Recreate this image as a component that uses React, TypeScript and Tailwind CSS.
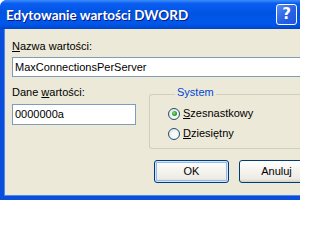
import React from "react";

function Radio({ checked, label, accel }: { checked?: boolean; label: string; accel: string }) {
  return (
    <div className="flex items-center h-[13px] gap-[3px]">
      <div className="w-[12px] h-[12px] rounded-full border border-[#1C5180] bg-[radial-gradient(circle_at_60%_60%,#FFFFFF_0%,#F4F4F0_45%,#D8D6CC_100%)] flex items-center justify-center">
        {checked && (
          <div className="w-[5px] h-[5px] rounded-full bg-[radial-gradient(circle_at_40%_40%,#8BE07D_0%,#2DA32C_55%,#1C7E1B_100%)]" />
        )}
      </div>
      <span className="leading-[13px]">
        <span className="underline decoration-1 underline-offset-1">{accel}</span>
        {label}
      </span>
    </div>
  );
}

function Button({ children, isDefault }: { children: React.ReactNode; isDefault?: boolean }) {
  return (
    <div
      className={
        isDefault
          ? "shrink-0 w-[75px] h-[23px] rounded-[3px] border border-[#003C74] bg-[linear-gradient(to_bottom,#FFFFFF_0%,#F6F5F0_40%,#ECEBE4_85%,#D6D0C5_100%)] flex items-center justify-center shadow-[inset_0_0_0_1px_#CEE7FF,inset_0_0_0_2px_#9CB7EE]"
          : "shrink-0 w-[75px] h-[23px] rounded-[3px] border border-[#003C74] bg-[linear-gradient(to_bottom,#FFFFFF_0%,#F6F5F0_40%,#ECEBE4_85%,#D6D0C5_100%)] flex items-center justify-center"
      }
    >
      <span className="leading-[13px]">{children}</span>
    </div>
  );
}

export default function App() {
  return (
    <div className="w-[300px] h-[200px] overflow-hidden font-['Liberation_Sans',Arial,sans-serif]">
      <div className="w-[300px] h-[200px] flex flex-col rounded-tl-[7px] overflow-hidden bg-[#0054E3]">
        {/* Title bar */}
        <div className="h-[29px] shrink-0 flex items-center pl-[6px] pr-[3px] bg-[linear-gradient(to_bottom,#3D8FFA_0%,#0A5DF0_12%,#0054E3_45%,#0058EA_80%,#0050DC_92%,#0043C8_100%)]">
          <div className="flex-1 min-w-0">
            <span className="text-white font-bold text-[13.5px] leading-[15px] font-['Lato','Liberation_Sans',sans-serif] [text-shadow:1px_1px_0_#0A1883]">
              Edytowanie wartości DWORD
            </span>
          </div>
          <div className="w-[21px] h-[21px] shrink-0 rounded-[3px] border border-white bg-[linear-gradient(135deg,#5A8EF5_0%,#2A63E5_50%,#1F55DA_100%)] flex items-center justify-center text-white font-bold text-[15px] leading-[15px] font-['DejaVu_Sans',sans-serif]">
            ?
          </div>
        </div>
        {/* Frame + client */}
        <div className="flex-1 min-h-0 flex flex-col pl-[4px] pb-[4px] bg-[#0A4FDB]">
          <div className="flex-1 min-h-0 overflow-hidden bg-[#ECE9D8] border-l border-b border-[#4F86EC] text-[11px] leading-[13px] text-black pl-[7px] pt-[11px]">
            <div>
              <span className="underline decoration-1 underline-offset-1">N</span>azwa wartości:
            </div>
            <div className="mt-[4px] h-[20px] bg-white border border-r-0 border-[#7F9DB9] flex items-center pl-[2px]">
              MaxConnectionsPerServer
            </div>
            <div className="flex mt-[9px]">
              <div className="w-[124px] shrink-0">
                <div>
                  Dane <span className="underline decoration-1 underline-offset-1">w</span>artości:
                </div>
                <div className="mt-[5px] h-[21px] bg-white border border-[#7F9DB9] flex items-center pl-[2px]">
                  0000000a
                </div>
              </div>
              <fieldset className="ml-[13px] flex-1 min-w-0 border border-r-0 border-[#D0D0BF] rounded-l-[3px] pl-[18px] pb-[8px]">
                <legend className="ml-[7px] px-[2px] pb-[4px] text-[#0046D5] leading-[13px]">System</legend>
                <div className="mt-[4px]">
                  <Radio checked accel="S" label="zesnastkowy" />
                </div>
                <div className="mt-[7px]">
                  <Radio accel="D" label="ziesiętny" />
                </div>
              </fieldset>
            </div>
            <div className="flex mt-[11px] pl-[142px] gap-[10px]">
              <Button isDefault>OK</Button>
              <Button>Anuluj</Button>
            </div>
          </div>
        </div>
      </div>
    </div>
  );
}
